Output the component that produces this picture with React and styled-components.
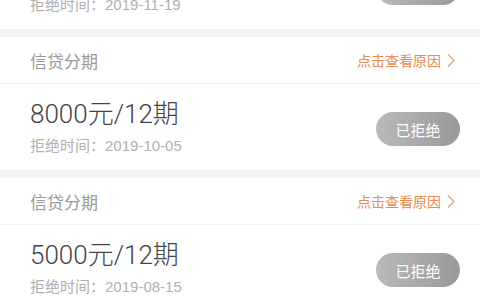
import React from "react";
import styled, { createGlobalStyle } from "styled-components";

const GlobalStyle = createGlobalStyle`
    html, body {
        margin: 0;
        padding: 0;
        background: #f4f4f4;
        font-family: "Liberation Sans", "Noto Sans CJK SC", sans-serif;
    }
`;

const Screen = styled.div`
    width: 480px;
    height: 300px;
    overflow: hidden;
    background: #f4f4f4;
`;

// scroll offset: first record is partly out of view
const List = styled.div`
    display: flex;
    flex-direction: column;
    gap: 8px;
    margin-top: -104px;
`;

const Card = styled.div`
    background: #fff;
`;

const CardHeader = styled.div`
    display: flex;
    align-items: center;
    justify-content: space-between;
    height: 46px;
    padding: 0 24px 0 30px;
    border-bottom: 1px solid #f0f0f0;
`;

const Category = styled.div`
    font-size: 17px;
    color: #9a9a9a;
`;

const ReasonLink = styled.div`
    display: flex;
    align-items: center;
    gap: 5px;
    font-size: 14px;
    color: #ea8a4f;
`;

const CardBody = styled.div`
    display: flex;
    align-items: center;
    justify-content: space-between;
    height: 86px;
    padding: 0 20px 0 30px;
    box-sizing: border-box;
`;

const Info = styled.div`
    display: flex;
    flex-direction: column;
`;

const Amount = styled.div`
    font-family: "Roboto", "Noto Sans CJK SC", sans-serif;
    font-weight: 300;
    font-size: 26px;
    line-height: 32px;
    color: #444;
`;

const DateText = styled.div`
    margin-top: 6px;
    font-size: 15px;
    line-height: 20px;
    color: #b0b0b0;
`;

const StatusButton = styled.button`
    width: 84px;
    height: 34px;
    margin-top: 4px;
    border: none;
    border-radius: 17px;
    background: linear-gradient(to right, #bababa, #999);
    color: #fff;
    font-family: inherit;
    font-size: 15px;
    padding: 0;
`;

const records = [
    { amount: "6000元/12期", date: "2019-11-19" },
    { amount: "8000元/12期", date: "2019-10-05" },
    { amount: "5000元/12期", date: "2019-08-15" },
];

function Chevron() {
    return (
        <svg width="10" height="15" viewBox="0 0 10 15">
            <polyline points="2,1.5 8,7.5 2,13.5" fill="none" stroke="#e0a47c" strokeWidth="1.3" />
        </svg>
    );
}

function Record({ item }) {
    return (
        <Card>
            <CardHeader>
                <Category>信贷分期</Category>
                <ReasonLink>点击查看原因<Chevron /></ReasonLink>
            </CardHeader>
            <CardBody>
                <Info>
                    <Amount>{item.amount}</Amount>
                    <DateText>拒绝时间：{item.date}</DateText>
                </Info>
                <StatusButton>已拒绝</StatusButton>
            </CardBody>
        </Card>
    );
}

export default function App() {
    return (
        <>
            <GlobalStyle />
            <Screen>
                <List>
                    {records.map((v, i) => (
                        <Record key={i} item={v} />
                    ))}
                </List>
            </Screen>
        </>
    );
}
